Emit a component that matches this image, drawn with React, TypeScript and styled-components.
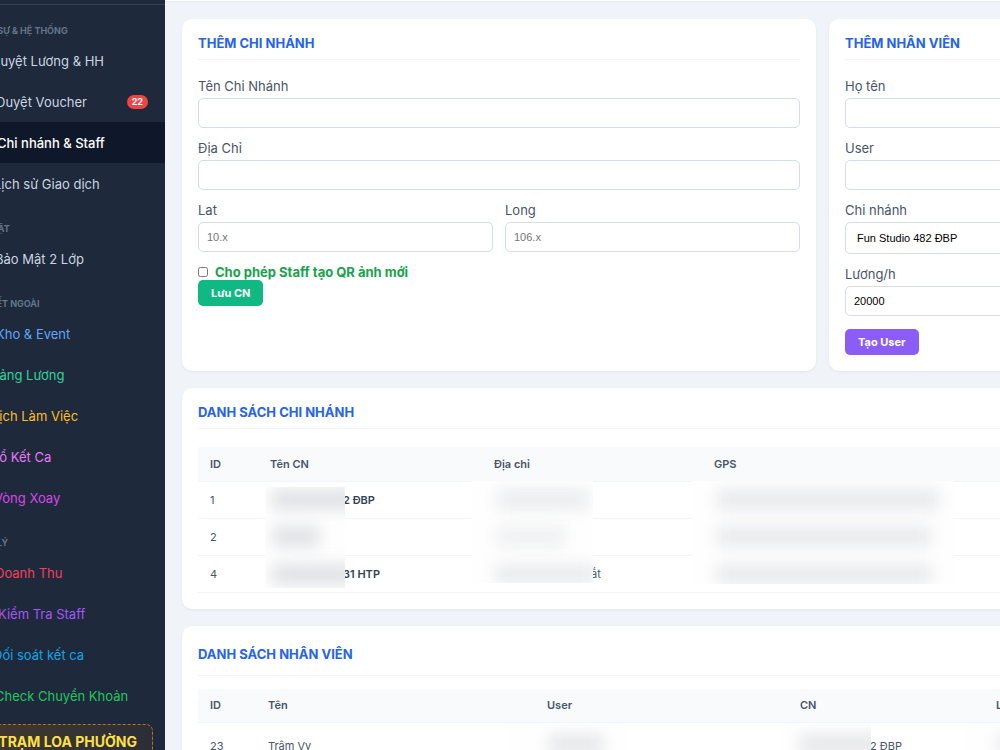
import React from "react";
import styled, { createGlobalStyle } from "styled-components";

const GlobalStyle = createGlobalStyle`
  * { box-sizing: border-box; }
  body {
    margin: 0;
    background: #f0f4f9;
    color: #475569;
    font-family: Inter, "Liberation Sans", sans-serif;
    font-size: 13px;
    line-height: 16px;
  }
`;

const Shell = styled.div`
  display: flex;
  height: 100vh;
  overflow: hidden;
`;

const Sidebar = styled.aside`
  flex: none;
  width: 165px;
  overflow: hidden;
  background: #1e293b;
`;

const SidebarInner = styled.div`
  width: 211px;
  margin-left: -46px;
`;

const Divider = styled.div`
  height: 5px;
  margin-bottom: 17px;
  border-bottom: 1px solid #334155;
`;

const NavHeading = styled.h2`
  margin: 0;
  height: 34px;
  padding: 19px 0 0 14px;
  color: #64748b;
  font-size: 9px;
  font-weight: 700;
  line-height: 12px;
  white-space: nowrap;
  &:first-of-type {
    height: 18px;
    padding-top: 3px;
  }
`;

const NavLink = styled.a<{ $color?: string; $active?: boolean; $icon: number }>`
  display: flex;
  align-items: center;
  height: 41px;
  padding: 0 17px 0 ${(p) => 17 + p.$icon}px;
  color: ${(p) => (p.$active ? "#ffffff" : p.$color || "#cbd5e1")};
  background: ${(p) => (p.$active ? "#0f172a" : "transparent")};
  font-weight: ${(p) => (p.$active ? 500 : 400)};
  text-decoration: none;
  white-space: nowrap;
`;

const Badge = styled.span`
  margin-left: auto;
  padding: 0 5px;
  border-radius: 7px;
  background: #ef4444;
  color: #ffffff;
  font-size: 9px;
  font-weight: 700;
  line-height: 14px;
`;

const Station = styled.a`
  display: block;
  margin: 8px 12px 0;
  padding: 9px 15px 12px;
  border: 1px dashed #b4780f;
  border-radius: 7px;
  background: linear-gradient(90deg, #423a2d, #2b2e37);
  color: #fde047;
  font-size: 14px;
  font-weight: 700;
  text-align: right;
  text-decoration: none;
  white-space: nowrap;
`;

const Main = styled.main`
  flex: 1;
  min-width: 0;
  overflow: hidden;
`;

const TopBar = styled.header`
  height: 2px;
  background: #ffffff;
  border-bottom: 1px solid #e7ebf2;
`;

const Content = styled.div`
  display: flex;
  flex-direction: column;
  gap: 17px;
  min-width: 1315px;
  padding: 17px;
`;

const FormGrid = styled.div`
  display: grid;
  grid-template-columns: 1fr 1fr;
  gap: 13px;
`;

const Card = styled.section`
  padding: 16px;
  border-radius: 10px;
  background: #ffffff;
  box-shadow: 0 1px 3px rgba(15, 23, 42, 0.06);
`;

const CardTitle = styled.h3<{ $tall?: boolean }>`
  margin: 0 0 ${(p) => (p.$tall ? 13 : 18)}px;
  padding: ${(p) => (p.$tall ? "4px 0 13px" : "0 0 8px")};
  border-bottom: 1px solid #f1f5f9;
  color: #2563eb;
  font-size: 13px;
  font-weight: 700;
`;

const Field = styled.label`
  display: flex;
  flex-direction: column;
  gap: 4px;
  margin-bottom: 12px;
`;

const FieldRow = styled.div`
  display: grid;
  grid-template-columns: 1fr 1fr;
  gap: 12px;
`;

const Input = styled.input`
  width: 100%;
  height: 30px;
  padding: 0 8px;
  border: 1px solid #d5dde8;
  border-radius: 5px;
  background: #ffffff;
  color: #000000;
  font: 11px "Liberation Sans", Arial, sans-serif;
  &::placeholder { color: #757575; }
`;

const Select = styled.select`
  width: 100%;
  height: 32px;
  padding: 0 7px;
  border: 1px solid #d5dde8;
  border-radius: 5px;
  background: #ffffff;
  color: #000000;
  font: 11px "Liberation Sans", Arial, sans-serif;
`;

const CheckLabel = styled.label`
  display: flex;
  align-items: center;
  gap: 7px;
  color: #16a34a;
  font-weight: 700;
`;

const Checkbox = styled.input`
  width: 10px;
  height: 10px;
  margin: 0;
`;

const Button = styled.button<{ $color: string; $spaced?: boolean }>`
  display: block;
  height: 26px;
  margin-top: ${(p) => (p.$spaced ? 13 : 0)}px;
  padding: 0 13px;
  border: 0;
  border-radius: 5px;
  background: ${(p) => p.$color};
  color: #ffffff;
  font: 700 11px Inter, sans-serif;
`;

const TableWrap = styled.div`
  position: relative;
`;

const Table = styled.table<{ $row: number }>`
  width: 100%;
  table-layout: fixed;
  border-collapse: collapse;
  font-size: 11px;
  th, td {
    padding: 0 12px;
    border-bottom: 1px solid #f1f5f9;
    text-align: left;
    white-space: nowrap;
  }
  th {
    height: 34px;
    background: #f8fafc;
    font-weight: 600;
  }
  td { height: ${(p) => p.$row}px; }
  td strong { color: #334155; font-weight: 600; }
`;

const Indented = styled.span<{ $by: number }>`
  padding-left: ${(p) => p.$by}px;
`;

const Mask = styled.div<{ $left: number; $top: number; $width: number; $height: number }>`
  position: absolute;
  left: ${(p) => p.$left}px;
  top: ${(p) => p.$top}px;
  width: ${(p) => p.$width}px;
  height: ${(p) => p.$height}px;
  overflow: hidden;
  background: #fefefe;
`;

const Smudge = styled.div<{ $width: number; $inset: number; $top: number; $tone: string }>`
  width: ${(p) => p.$width}px;
  height: 19px;
  margin: ${(p) => p.$top}px 0 0 ${(p) => p.$inset}px;
  background: ${(p) => p.$tone};
  filter: blur(8px);
`;

type Item = { text: string; icon: number; color?: string; active?: boolean; badge?: string };
type Group = { heading: string; items: Item[] };

const groups: Group[] = [
  {
    heading: "NHÂN SỰ & HỆ THỐNG",
    items: [
      { text: "Duyệt Lương & HH", icon: 20 },
      { text: "Duyệt Voucher", icon: 25, badge: "22" },
      { text: "Chi nhánh & Staff", icon: 26, active: true },
      { text: "Lịch sử Giao dịch", icon: 23 },
    ],
  },
  {
    heading: "BẢO MẬT",
    items: [{ text: "Bảo Mật 2 Lớp", icon: 24 }],
  },
  {
    heading: "LIÊN KẾT NGOÀI",
    items: [
      { text: "Kho & Event", icon: 25, color: "#60a5fa" },
      { text: "Bảng Lương", icon: 20, color: "#34d399" },
      { text: "Lịch Làm Việc", icon: 21, color: "#fbbf24" },
      { text: "Sổ Kết Ca", icon: 20, color: "#e879f9" },
      { text: "Vòng Xoay", icon: 23, color: "#d946ef" },
    ],
  },
  {
    heading: "QUẢN LÝ",
    items: [
      { text: "Doanh Thu", icon: 24, color: "#f43f5e" },
      { text: "Kiểm Tra Staff", icon: 27, color: "#a855f7" },
      { text: "Đối soát kết ca", icon: 22, color: "#0ea5e9" },
      { text: "Check Chuyển Khoản", icon: 24, color: "#22c55e" },
    ],
  },
];

export default function App() {
  return (
    <>
      <GlobalStyle />
      <Shell>
        <Sidebar>
          <SidebarInner as="nav">
            <Divider />
            {groups.map((group) => (
              <React.Fragment key={group.heading}>
                <NavHeading>{group.heading}</NavHeading>
                {group.items.map((item) => (
                  <NavLink key={item.text} href="#" $icon={item.icon} $color={item.color} $active={item.active}>
                    {item.text}
                    {item.badge && <Badge>{item.badge}</Badge>}
                  </NavLink>
                ))}
              </React.Fragment>
            ))}
            <Station href="#">TRẠM LOA PHƯỜNG</Station>
          </SidebarInner>
        </Sidebar>
        <Main>
          <TopBar />
          <Content>
            <FormGrid>
              <Card>
                <CardTitle>THÊM CHI NHÁNH</CardTitle>
                <Field>
                  Tên Chi Nhánh
                  <Input type="text" />
                </Field>
                <Field>
                  Địa Chỉ
                  <Input type="text" />
                </Field>
                <FieldRow>
                  <Field>
                    Lat
                    <Input type="text" placeholder="10.x" />
                  </Field>
                  <Field>
                    Long
                    <Input type="text" placeholder="106.x" />
                  </Field>
                </FieldRow>
                <CheckLabel>
                  <Checkbox type="checkbox" />
                  Cho phép Staff tạo QR ảnh mới
                </CheckLabel>
                <Button type="button" $color="#10b981">Lưu CN</Button>
              </Card>
              <Card>
                <CardTitle>THÊM NHÂN VIÊN</CardTitle>
                <Field>
                  Họ tên
                  <Input type="text" />
                </Field>
                <Field>
                  User
                  <Input type="text" />
                </Field>
                <Field>
                  Chi nhánh
                  <Select defaultValue="482">
                    <option value="482">Fun Studio 482 ĐBP</option>
                  </Select>
                </Field>
                <Field>
                  Lương/h
                  <Input type="text" defaultValue="20000" />
                </Field>
                <Button type="button" $color="#8b5cf6" $spaced>Tạo User</Button>
              </Card>
            </FormGrid>

            <Card>
              <CardTitle>DANH SÁCH CHI NHÁNH</CardTitle>
              <TableWrap>
                <Table $row={37}>
                  <colgroup>
                    <col style={{ width: 60 }} />
                    <col style={{ width: 224 }} />
                    <col style={{ width: 220 }} />
                    <col />
                  </colgroup>
                  <thead>
                    <tr><th>ID</th><th>Tên CN</th><th>Địa chỉ</th><th>GPS</th></tr>
                  </thead>
                  <tbody>
                    <tr><td>1</td><td><Indented as="strong" $by={73}>2 ĐBP</Indented></td><td /><td /></tr>
                    <tr><td>2</td><td /><td /><td /></tr>
                    <tr><td>4</td><td><Indented as="strong" $by={73}>31 HTP</Indented></td><td><Indented $by={97}>ắt</Indented></td><td /></tr>
                  </tbody>
                </Table>
                <Mask $left={67} $top={40} $width={80} $height={101}>
                  <Smudge $width={84} $inset={7} $top={3} $tone="#dddfe3" />
                  <Smudge $width={46} $inset={8} $top={18} $tone="#dddfe3" />
                  <Smudge $width={84} $inset={7} $top={19} $tone="#dddfe3" />
                </Mask>
                <Mask $left={274} $top={34} $width={121} $height={102}>
                  <Smudge $width={92} $inset={25} $top={9} $tone="#eaebed" />
                  <Smudge $width={68} $inset={25} $top={18} $tone="#eeeff1" />
                  <Smudge $width={100} $inset={23} $top={19} $tone="#e8e9ec" />
                </Mask>
                <Mask $left={494} $top={34} $width={262} $height={103}>
                  <Smudge $width={222} $inset={25} $top={9} $tone="#e7e8eb" />
                  <Smudge $width={214} $inset={25} $top={18} $tone="#e7e8eb" />
                  <Smudge $width={214} $inset={25} $top={19} $tone="#e7e8eb" />
                </Mask>
              </TableWrap>
            </Card>

            <Card>
              <CardTitle $tall>DANH SÁCH NHÂN VIÊN</CardTitle>
              <TableWrap>
                <Table $row={46}>
                  <colgroup>
                    <col style={{ width: 58 }} />
                    <col style={{ width: 279 }} />
                    <col style={{ width: 253 }} />
                    <col style={{ width: 196 }} />
                    <col />
                  </colgroup>
                  <thead>
                    <tr><th>ID</th><th>Tên</th><th>User</th><th>CN</th><th>Lương/h</th></tr>
                  </thead>
                  <tbody>
                    <tr><td>23</td><td>Trâm Vy</td><td /><td><Indented $by={70}>2 ĐBP</Indented></td><td /></tr>
                  </tbody>
                </Table>
                <Mask $left={308} $top={34} $width={120} $height={60}>
                  <Smudge $width={54} $inset={43} $top={12} $tone="#e4e5e8" />
                </Mask>
                <Mask $left={584} $top={34} $width={89} $height={60}>
                  <Smudge $width={82} $inset={18} $top={12} $tone="#e4e5e8" />
                </Mask>
                <Mask $left={768} $top={34} $width={90} $height={60}>
                  <Smudge $width={60} $inset={31} $top={12} $tone="#e8e9ec" />
                </Mask>
              </TableWrap>
            </Card>
          </Content>
        </Main>
      </Shell>
    </>
  );
}
